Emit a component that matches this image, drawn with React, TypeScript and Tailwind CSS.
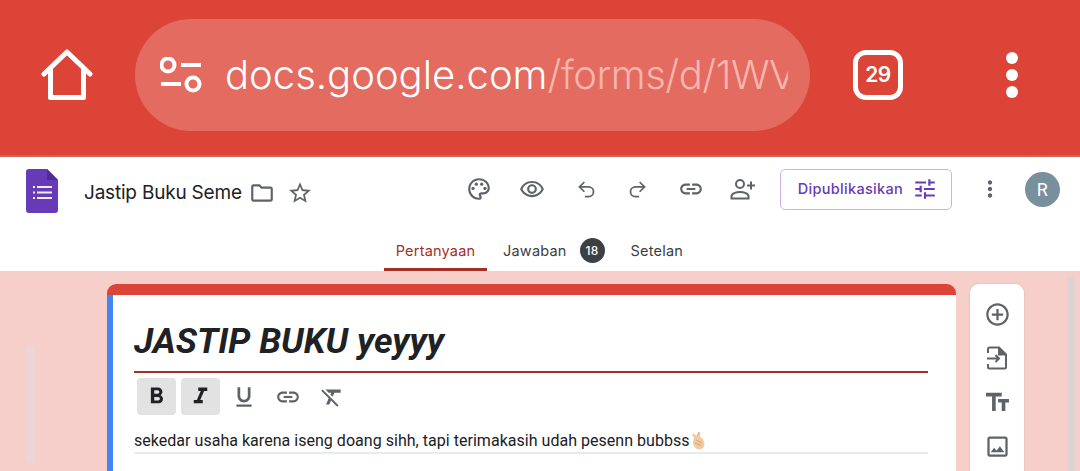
import {
  MdAddCircleOutline,
  MdFormatBold,
  MdFormatClear,
  MdFormatItalic,
  MdFormatUnderlined,
  MdLink,
  MdMoreVert,
  MdOutlineFolder,
  MdOutlineImage,
  MdOutlinePalette,
  MdOutlineRemoveRedEye,
  MdOutlineStarBorder,
  MdTextFields,
  MdTune,
} from "react-icons/md";
import { Redo2, Undo2 } from "lucide-react";

function HomeIcon() {
  return (
    <svg width="52" height="52" viewBox="0 0 52 52" fill="none" stroke="white" strokeWidth="5" strokeLinecap="round" strokeLinejoin="round">
      <path d="M3 25 26 3l23 22" />
      <path d="M9.500 20v28.500h33V20" />
    </svg>
  );
}

function SiteIcon() {
  return (
    <svg width="42" height="36" viewBox="0 0 42 36" fill="none" stroke="white" strokeWidth="4">
      <circle cx="8" cy="8" r="6.500" />
      <circle cx="33" cy="27" r="6.500" />
      <path d="M21 8h20M1 27h20" />
    </svg>
  );
}

function FormsLogo() {
  return (
    <svg width="32" height="44" viewBox="0 0 32 44">
      <path d="M3 0h18l11 11v30a3 3 0 0 1-3 3H3a3 3 0 0 1-3-3V3a3 3 0 0 1 3-3z" fill="#673ab7" />
      <path d="M21 0l11 11H21z" fill="#4f2b94" />
      <path d="M11 18h15M11 23.500h15M11 29h15M7 18h2M7 23.500h2M7 29h2" stroke="#f1eaf9" strokeWidth="2.200" />
    </svg>
  );
}

function PersonAddIcon() {
  return (
    <svg width="26" height="22" viewBox="0 0 26 22" fill="none" stroke="#5f6368" strokeWidth="2" className="shrink-0">
      <circle cx="10" cy="6" r="4" />
      <path d="M1.500 20.500v-2c0-3 4.500-4.500 8.500-4.500s8.500 1.500 8.500 4.500v2z" />
      <path d="M21 3.500v8M17 7.500h8" />
    </svg>
  );
}

function ImportIcon() {
  return (
    <svg width="22" height="24" viewBox="0 0 22 24" fill="none" stroke="#5f6368" strokeWidth="2">
      <path d="M2 7V3a1.500 1.500 0 0 1 1.500-1.500H13L20 8.500V21a1.500 1.500 0 0 1-1.500 1.500h-15A1.500 1.500 0 0 1 2 21v-3" />
      <path d="M13 1.500V8.500h7" fill="#5f6368" />
      <path d="M1 12.500h12M9.500 9l3.500 3.500L9.500 16" />
    </svg>
  );
}

function FingerHeart() {
  return (
    <svg width="17" height="19" viewBox="0 0 17 19" className="shrink-0">
      <path d="M4 7 2 3.500 3.500 2.500 7 5l2-4 1.500.5L10 6l3 2 1.500 5a5 5 0 0 1-5 5.500C6 18.500 3 15 3 11z" fill="#f3c9a0" />
      <path d="M7 5 9 1M6 9l6 3M5 12l6 2.500" stroke="#d9a679" strokeWidth="1" fill="none" />
    </svg>
  );
}

const toolIcons = "text-[#5f6368] shrink-0";

export default function App() {
  return (
    <div className="h-[471px] w-[1080px] overflow-hidden bg-[#f6cfcb] font-['Roboto',sans-serif]">
      {/* browser bar */}
      <header className="box-border flex h-[157px] items-center border-b-2 border-[#c9655a] bg-[#db4437] pb-[5px] pl-[41px]">
        <HomeIcon />
        <div className="ml-[42px] flex h-[112px] w-[675px] items-center overflow-hidden rounded-full bg-[#e36b60] pl-[25px]">
          <SiteIcon />
          <div className="ml-[23px] w-[563px] overflow-hidden whitespace-nowrap font-['Inter',sans-serif] text-[40px] leading-[56px] font-light text-white">
            docs.google.com<span className="tracking-[-0.5px] text-[#f7b5ae]">/forms/d/1WV</span>
          </div>
        </div>
        <div className="ml-[43px] flex h-[50px] w-[50px] items-center justify-center rounded-[13px] border-[5px] border-white font-['Inter',sans-serif] text-[21px] font-semibold tracking-[-0.5px] text-white">
          29
        </div>
        <div className="ml-[103px] flex flex-col gap-[5px]">
          <span className="h-[12px] w-[12px] rounded-full bg-white" />
          <span className="h-[12px] w-[12px] rounded-full bg-white" />
          <span className="h-[12px] w-[12px] rounded-full bg-white" />
        </div>
      </header>

      {/* forms app bar */}
      <div className="flex h-[114px] flex-col bg-white">
        <div className="flex h-[76px] shrink-0 items-center pb-[8px] pl-[26px]">
          <FormsLogo />
          <div className="mt-[4px] flex items-center">
            <span className="ml-[26px] font-['Inter',sans-serif] text-[19px] tracking-[-0.2px] text-[#202124]">Jastip Buku Seme</span>
            <MdOutlineFolder className="ml-[7px] shrink-0 text-[#5f6368]" size={26} />
            <MdOutlineStarBorder className="ml-[12px] shrink-0 text-[#5f6368]" size={26} />
          </div>
          <div className="mb-[4px] flex items-center">
            <MdOutlinePalette className={`ml-[153px] ${toolIcons}`} size={26} />
            <MdOutlineRemoveRedEye className={`ml-[27px] ${toolIcons}`} size={26} />
            <Undo2 className={`ml-[31px] ${toolIcons}`} size={21} strokeWidth={2} />
            <Redo2 className={`ml-[30px] ${toolIcons}`} size={21} strokeWidth={2} />
            <MdLink className={`ml-[30px] ${toolIcons}`} size={26} />
            <div className="ml-[26px]">
              <PersonAddIcon />
            </div>
            <div className="ml-[24px] flex h-[41px] w-[172px] items-center rounded-[5px] border border-[#cdb2ee] pl-[17px] font-['Inter',sans-serif] text-[14.5px] font-medium tracking-[0.3px] text-[#673ab7]">
              Dipublikasikan
              <MdTune className="ml-[9px] shrink-0 text-[#673ab7]" size={26} />
            </div>
            <MdMoreVert className={`ml-[25px] ${toolIcons}`} size={26} />
            <div className="ml-[22px] flex h-[35px] w-[35px] items-center justify-center rounded-full bg-[#78909c] text-[18px] text-white">R</div>
          </div>
        </div>
        <div className="flex flex-1 items-stretch pl-[384px] font-['Inter',sans-serif] text-[14.5px] tracking-[0.2px] text-[#3c4043]">
          <div className="flex w-[103px] items-center justify-center border-b-[3px] border-[#a52f25] text-[#a52f25]">Pertanyaan</div>
          <div className="ml-[16px] flex items-center border-b-[3px] border-transparent">Jawaban</div>
          <div className="mb-[3px] ml-[13px] flex items-center">
            <span className="flex h-[25px] w-[25px] items-center justify-center rounded-full bg-[#3c4043] text-[12px] font-medium text-white">18</span>
          </div>
          <div className="ml-[26px] flex items-center border-b-[3px] border-transparent">Setelan</div>
        </div>
      </div>

      {/* editor */}
      <div className="flex items-start pl-[25px] pt-[13px]">
        <div className="mt-[62px] h-[118px] w-[10px] rounded-full bg-[#ecd5d4]" />
        <div className="ml-[72px] w-[849px] shrink-0 overflow-hidden rounded-t-[9px] bg-white">
          <div className="h-[11px] bg-[#db4437]" />
          <div className="h-[200px] border-l-[6px] border-[#4285f4] pl-[21px] pr-[28px] pt-[25px]">
            <h1 className="text-[35.4px] leading-[42px] font-bold text-[#202124] italic">JASTIP BUKU yeyyy</h1>
            <div className="mt-[9px] h-[2px] bg-[#a52f25]" />
            <div className="mt-[5px] flex items-center pl-[3px]">
              <div className="flex h-[37px] w-[39px] items-center justify-center rounded-[4px] bg-[#e2e2e2]">
                <MdFormatBold className="text-[#202124]" size={27} />
              </div>
              <div className="ml-[5px] flex h-[37px] w-[39px] items-center justify-center rounded-[4px] bg-[#e2e2e2]">
                <MdFormatItalic className="text-[#202124]" size={27} />
              </div>
              <MdFormatUnderlined className={`ml-[11px] ${toolIcons}`} size={26} />
              <MdLink className={`ml-[18px] ${toolIcons}`} size={26} />
              <MdFormatClear className={`ml-[18px] ${toolIcons}`} size={26} />
            </div>
            <div className="mt-[14px] flex h-[25px] items-center border-b-2 border-[#e8eaed] text-[16px] tracking-[0.03px] text-[#202124]">
              sekedar usaha karena iseng doang sihh, tapi terimakasih udah pesenn bubbss
              <FingerHeart />
            </div>
          </div>
        </div>

        <div className="ml-[14px] flex h-[200px] w-[54px] shrink-0 flex-col items-center gap-[16px] rounded-t-[9px] bg-white pt-[16px] shadow-[0_0_2px_rgba(0,0,0,0.15)]">
          <div className="flex h-[28px] items-center"><MdAddCircleOutline className={toolIcons} size={27} /></div>
          <div className="flex h-[28px] items-center"><ImportIcon /></div>
          <div className="flex h-[28px] items-center"><MdTextFields className={toolIcons} size={29} /></div>
          <div className="flex h-[28px] items-center"><MdOutlineImage className={toolIcons} size={27} /></div>
        </div>

        <div className="-mt-[7px] ml-[43px] h-[200px] w-[8px] shrink-0 bg-[#dcd3d2]" />
      </div>
    </div>
  );
}
